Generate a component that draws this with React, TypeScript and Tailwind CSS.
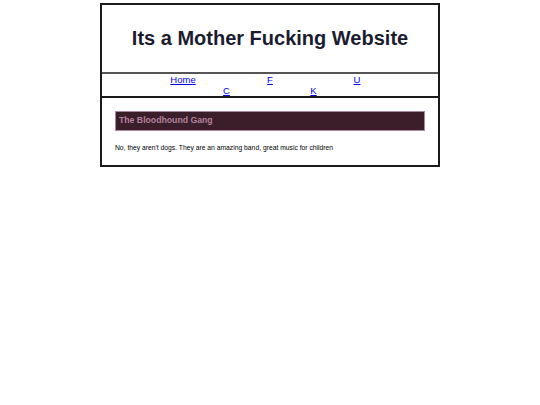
import React from "react";

const links = ["Home", "F", "U", "C", "K"];

export default function App() {
  return (
    <div className="min-h-[405px] bg-white pt-[3px] font-['Liberation_Sans',Arial,sans-serif]">
      <div className="mx-auto w-[340px] border-2 border-[#1a1a1a]">
        <header className="flex h-[67px] items-center justify-center pb-[2px]">
          <h1 className="text-[20px] font-bold leading-none text-[#1c1c30]">
            Its a Mother Fucking Website
          </h1>
        </header>
        <nav className="flex flex-wrap justify-center border-y-2 border-t-[#555] border-b-[#1a1a1a] text-[9.5px] leading-[11px]">
          {links.map((l) => (
            <a key={l} href="#" className="w-[87px] text-center text-[#0000ee] underline">
              {l}
            </a>
          ))}
        </nav>
        <main className="px-[13px] pt-[13px] pb-[13px]">
          <h2 className="flex h-[20px] items-center border border-[#a98aa0] bg-[#3a1e2a] px-[3px] text-[8.7px] font-bold text-[#b5829e]">
            The Bloodhound Gang
          </h2>
          <p className="mt-[12px] text-[6.75px] leading-[9px] text-black">
            No, they aren't dogs. They are an amazing band, great music for children
          </p>
        </main>
      </div>
    </div>
  );
}
